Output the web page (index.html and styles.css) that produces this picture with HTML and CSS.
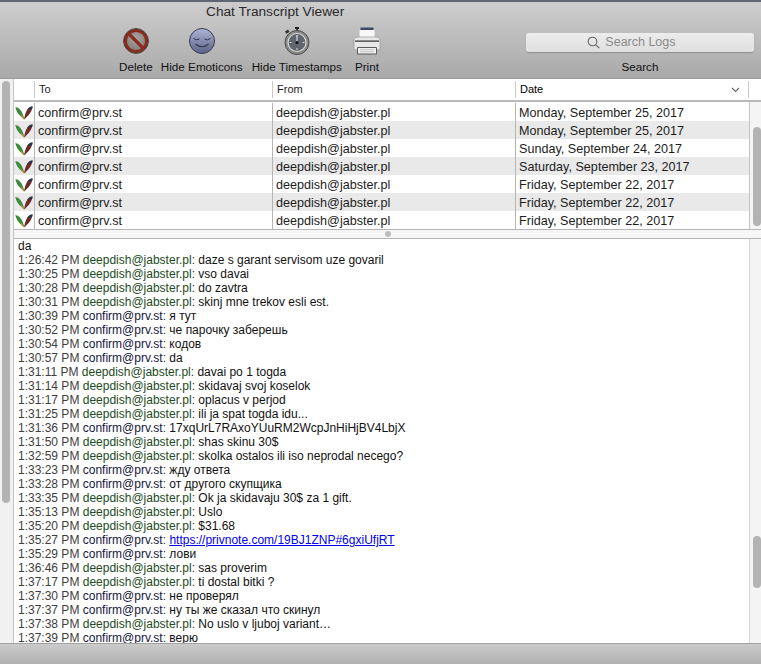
FILE: index.html
```html
<!DOCTYPE html>
<html>
<head>
    <title>Chat Transcript Viewer</title>
    <link rel="stylesheet" href="styles.css">
</head>
<body>
    <svg class="defs" width="0" height="0">
        <symbol id="wing" viewBox="0 0 18 14">
            <path d="M0.3 1.2C1.5 1 2.6 1.4 3.4 2C6 3.8 8 7.5 9.4 12.8L9 13.6C7.5 11.5 5.5 10.4 3.8 8.2C2.2 6.2 0.9 3.6 0.3 1.2Z" fill="#3c8a3c"/>
            <path d="M17.6 0.4C16.5 0.3 15.3 0.7 14.3 1.4C11.8 3.3 10 7.4 9.2 12.6L9.6 13.6C11 11.4 13.2 10 14.8 7.6C16.2 5.6 17.2 3 17.6 0.4Z" fill="#6d2a26"/>
            <path d="M17.6 0.4C16.5 0.3 15.3 0.7 14.3 1.4C13.4 2.1 12.6 3 12 4.1C13.8 3.2 15.8 3.2 17.1 3C17.3 2.2 17.5 1.3 17.6 0.4Z" fill="#27344f"/>
            <path d="M6.4 8.8C7.5 10 8.6 11.4 9.4 12.8L9 13.6C8.2 12.4 7.2 11.6 6.2 10.8Z" fill="#c89a3a"/>
        </symbol>
    </svg>

    <header class="toolbar">
        <div class="window-title">Chat Transcript Viewer</div>
        <div class="tools">
            <div class="tool tool-delete">
                <svg width="30" height="30" viewBox="0 0 30 30">
                    <defs>
                        <radialGradient id="noFill" cx="50%" cy="40%" r="60%">
                            <stop offset="0" stop-color="#a9a5a2"/>
                            <stop offset="1" stop-color="#7d7976"/>
                        </radialGradient>
                    </defs>
                    <circle cx="15" cy="14" r="11.2" fill="url(#noFill)"/>
                    <circle cx="15" cy="14" r="10.6" fill="none" stroke="#8c2a1e" stroke-width="3"/>
                    <circle cx="15" cy="14" r="12.4" fill="none" stroke="#3c3a38" stroke-width="1"/>
                    <path d="M7.5 6.5L22.5 21.5" stroke="#8c2a1e" stroke-width="3.2"/>
                </svg>
                <span>Delete</span>
            </div>
            <div class="tool tool-emoticons">
                <svg width="30" height="30" viewBox="0 0 30 30">
                    <defs>
                        <linearGradient id="faceFill" x1="0" y1="0" x2="0" y2="1">
                            <stop offset="0" stop-color="#aeb4d6"/>
                            <stop offset="1" stop-color="#5d6386"/>
                        </linearGradient>
                    </defs>
                    <circle cx="15" cy="14" r="12.5" fill="url(#faceFill)" stroke="#3a3d50" stroke-width="1"/>
                    <path d="M6.5 11.5Q10 14 12.5 12M17.5 12Q20 14 23.5 11.5" fill="none" stroke="#30344c" stroke-width="1"/>
                    <path d="M8.5 17Q15 22.5 21.5 17" fill="none" stroke="#30344c" stroke-width="1.2"/>
                </svg>
                <span>Hide Emoticons</span>
            </div>
            <div class="tool tool-timestamps">
                <svg width="30" height="30" viewBox="0 0 30 30">
                    <rect x="13" y="0" width="4" height="2" fill="#222"/>
                    <rect x="14" y="2" width="2" height="2" fill="#444"/>
                    <path d="M3 4.5L6 2.5L7.5 4.8L4.5 6.8Z" fill="#333"/>
                    <circle cx="15" cy="15.5" r="12" fill="#8a8a8a" stroke="#4a4a4a" stroke-width="1"/>
                    <circle cx="15" cy="15.5" r="9" fill="#5f6670" stroke="#d8d8d8" stroke-width="1.2"/>
                    <path d="M15 8V10M15 21V23M7.5 15.5H9.5M20.5 15.5H22.5" stroke="#d8d8d8" stroke-width="1"/>
                    <path d="M15 8.5V15.5" stroke="#e8e8e8" stroke-width="1"/>
                    <circle cx="15" cy="15.5" r="1.5" fill="#111"/>
                </svg>
                <span>Hide Timestamps</span>
            </div>
            <div class="tool tool-print">
                <svg width="30" height="30" viewBox="0 0 30 30">
                    <rect x="8.5" y="0.5" width="13" height="4" fill="#3c4a66"/>
                    <rect x="7.5" y="3" width="15" height="10" fill="#f7f7f7"/>
                    <path d="M2 13Q2 10 7 10H23Q28 10 28 13V21Q28 23 26 23H4Q2 23 2 21Z" fill="#e8e8e8" stroke="#8a8a8a" stroke-width="0.6"/>
                    <rect x="3" y="13.5" width="24" height="1.2" fill="#2c2c2c"/>
                    <rect x="5" y="20" width="20" height="7.5" rx="1" fill="#5a5a5a"/>
                    <rect x="6" y="21" width="18" height="5.5" fill="#f0f0f0"/>
                    <path d="M8 22.8H22M8 24.8H22" stroke="#b4b4b4" stroke-width="0.7"/>
                </svg>
                <span>Print</span>
            </div>
            <div class="tool tool-search">
                <div class="search-field">
                    <svg width="13" height="13" viewBox="0 0 13 13">
                        <circle cx="5.5" cy="5.5" r="4.3" fill="none" stroke="#666" stroke-width="1.1"/>
                        <path d="M8.6 8.6L12.2 12.2" stroke="#666" stroke-width="1.2"/>
                    </svg>
                    Search Logs
                </div>
                <span>Search</span>
            </div>
        </div>
    </header>

    <div class="main">
        <aside class="side-scroll"><div class="side-thumb"></div></aside>
        <div class="content">
            <div class="table-head">
                <div class="col col-icon"></div>
                <div class="col col-to">To</div>
                <div class="col col-from">From</div>
                <div class="col col-date">Date
                    <svg width="9" height="6" viewBox="0 0 9 6"><path d="M1 1L4.5 4.5L8 1" fill="none" stroke="#666" stroke-width="1.1"/></svg>
                </div>
            </div>
            <div class="table-area">
                <div class="rows">
                    <div class="row">
                        <div class="col col-icon"><svg width="18" height="14"><use href="#wing"/></svg></div>
                        <div class="col col-to">confirm@prv.st</div>
                        <div class="col col-from">deepdish@jabster.pl</div>
                        <div class="col col-date">Monday, September 25, 2017</div>
                    </div>
                    <div class="row">
                        <div class="col col-icon"><svg width="18" height="14"><use href="#wing"/></svg></div>
                        <div class="col col-to">confirm@prv.st</div>
                        <div class="col col-from">deepdish@jabster.pl</div>
                        <div class="col col-date">Monday, September 25, 2017</div>
                    </div>
                    <div class="row">
                        <div class="col col-icon"><svg width="18" height="14"><use href="#wing"/></svg></div>
                        <div class="col col-to">confirm@prv.st</div>
                        <div class="col col-from">deepdish@jabster.pl</div>
                        <div class="col col-date">Sunday, September 24, 2017</div>
                    </div>
                    <div class="row">
                        <div class="col col-icon"><svg width="18" height="14"><use href="#wing"/></svg></div>
                        <div class="col col-to">confirm@prv.st</div>
                        <div class="col col-from">deepdish@jabster.pl</div>
                        <div class="col col-date">Saturday, September 23, 2017</div>
                    </div>
                    <div class="row">
                        <div class="col col-icon"><svg width="18" height="14"><use href="#wing"/></svg></div>
                        <div class="col col-to">confirm@prv.st</div>
                        <div class="col col-from">deepdish@jabster.pl</div>
                        <div class="col col-date">Friday, September 22, 2017</div>
                    </div>
                    <div class="row">
                        <div class="col col-icon"><svg width="18" height="14"><use href="#wing"/></svg></div>
                        <div class="col col-to">confirm@prv.st</div>
                        <div class="col col-from">deepdish@jabster.pl</div>
                        <div class="col col-date">Friday, September 22, 2017</div>
                    </div>
                    <div class="row">
                        <div class="col col-icon"><svg width="18" height="14"><use href="#wing"/></svg></div>
                        <div class="col col-to">confirm@prv.st</div>
                        <div class="col col-from">deepdish@jabster.pl</div>
                        <div class="col col-date">Friday, September 22, 2017</div>
                    </div>
                </div>
                <div class="scroll-track table-track"><div class="scroll-thumb table-thumb"></div></div>
            </div>
            <div class="splitter"><span class="split-dot"></span></div>
            <div class="chat-area">
                <div class="chat">
                    <div class="chat-first">da</div>
                    <div class="line"><span class="time">1:26:42 PM</span> <span class="them">deepdish@jabster.pl</span><span class="colon">:</span> daze s garant servisom uze govaril</div>
                    <div class="line"><span class="time">1:30:25 PM</span> <span class="them">deepdish@jabster.pl</span><span class="colon">:</span> vso davai</div>
                    <div class="line"><span class="time">1:30:28 PM</span> <span class="them">deepdish@jabster.pl</span><span class="colon">:</span> do zavtra</div>
                    <div class="line"><span class="time">1:30:31 PM</span> <span class="them">deepdish@jabster.pl</span><span class="colon">:</span> skinj mne trekov esli est.</div>
                    <div class="line"><span class="time">1:30:39 PM</span> <span class="me">confirm@prv.st</span><span class="colon">:</span> я тут</div>
                    <div class="line"><span class="time">1:30:52 PM</span> <span class="me">confirm@prv.st</span><span class="colon">:</span> че парочку заберешь</div>
                    <div class="line"><span class="time">1:30:54 PM</span> <span class="me">confirm@prv.st</span><span class="colon">:</span> кодов</div>
                    <div class="line"><span class="time">1:30:57 PM</span> <span class="me">confirm@prv.st</span><span class="colon">:</span> da</div>
                    <div class="line"><span class="time">1:31:11 PM</span> <span class="them">deepdish@jabster.pl</span><span class="colon">:</span> davai po 1 togda</div>
                    <div class="line"><span class="time">1:31:14 PM</span> <span class="them">deepdish@jabster.pl</span><span class="colon">:</span> skidavaj svoj koselok</div>
                    <div class="line"><span class="time">1:31:17 PM</span> <span class="them">deepdish@jabster.pl</span><span class="colon">:</span> oplacus v perjod</div>
                    <div class="line"><span class="time">1:31:25 PM</span> <span class="them">deepdish@jabster.pl</span><span class="colon">:</span> ili ja spat togda idu...</div>
                    <div class="line"><span class="time">1:31:36 PM</span> <span class="me">confirm@prv.st</span><span class="colon">:</span> 17xqUrL7RAxoYUuRM2WcpJnHiHjBV4LbjX</div>
                    <div class="line"><span class="time">1:31:50 PM</span> <span class="them">deepdish@jabster.pl</span><span class="colon">:</span> shas skinu 30$</div>
                    <div class="line"><span class="time">1:32:59 PM</span> <span class="them">deepdish@jabster.pl</span><span class="colon">:</span> skolka ostalos ili iso neprodal necego?</div>
                    <div class="line"><span class="time">1:33:23 PM</span> <span class="me">confirm@prv.st</span><span class="colon">:</span> жду ответа</div>
                    <div class="line"><span class="time">1:33:28 PM</span> <span class="me">confirm@prv.st</span><span class="colon">:</span> от другого скупщика</div>
                    <div class="line"><span class="time">1:33:35 PM</span> <span class="them">deepdish@jabster.pl</span><span class="colon">:</span> Ok ja skidavaju 30$ za 1 gift.</div>
                    <div class="line"><span class="time">1:35:13 PM</span> <span class="them">deepdish@jabster.pl</span><span class="colon">:</span> Uslo</div>
                    <div class="line"><span class="time">1:35:20 PM</span> <span class="them">deepdish@jabster.pl</span><span class="colon">:</span> $31.68</div>
                    <div class="line"><span class="time">1:35:27 PM</span> <span class="me">confirm@prv.st</span><span class="colon">:</span> <a href="#">https://privnote.com/19BJ1ZNP#6gxiUfjRT</a></div>
                    <div class="line"><span class="time">1:35:29 PM</span> <span class="me">confirm@prv.st</span><span class="colon">:</span> лови</div>
                    <div class="line"><span class="time">1:36:46 PM</span> <span class="them">deepdish@jabster.pl</span><span class="colon">:</span> sas proverim</div>
                    <div class="line"><span class="time">1:37:17 PM</span> <span class="them">deepdish@jabster.pl</span><span class="colon">:</span> ti dostal bitki ?</div>
                    <div class="line"><span class="time">1:37:30 PM</span> <span class="me">confirm@prv.st</span><span class="colon">:</span> не проверял</div>
                    <div class="line"><span class="time">1:37:37 PM</span> <span class="me">confirm@prv.st</span><span class="colon">:</span> ну ты же сказал что скинул</div>
                    <div class="line"><span class="time">1:37:38 PM</span> <span class="them">deepdish@jabster.pl</span><span class="colon">:</span> No uslo v ljuboj variant…</div>
                    <div class="line"><span class="time">1:37:39 PM</span> <span class="me">confirm@prv.st</span><span class="colon">:</span> верю</div>
                </div>
                <div class="scroll-track chat-track"><div class="scroll-thumb chat-thumb"></div></div>
            </div>
        </div>
    </div>

    <footer class="status-bar"></footer>
</body>
</html>
```

FILE: styles.css
```css
html, body {
    margin: 0;
    height: 100%;
}

body {
    width: 761px;
    height: 664px;
    overflow: hidden;
    display: flex;
    flex-direction: column;
    font-family: "Liberation Sans", Arial, "Noto Sans", sans-serif;
    font-size: 12px;
    color: #1c1c1c;
    background: #fff;
}

.defs {
    position: absolute;
}

/* toolbar */
.toolbar {
    height: 79px;
    flex: none;
    box-sizing: border-box;
    border-top: 2px solid #5f6572;
    border-bottom: 1px solid #9b9b9b;
    background: linear-gradient(#cdcdcd, #a9a9a9);
}

.window-title {
    height: 20px;
    line-height: 20px;
    padding-left: 206px;
    font-size: 13.7px;
    color: #2a2a2a;
}

.tools {
    display: flex;
    align-items: flex-end;
    height: 52px;
}

.tool {
    display: flex;
    flex-direction: column;
    align-items: center;
    color: #111;
    font-size: 11.7px;
    line-height: 14px;
    white-space: nowrap;
}

.tool svg {
    display: block;
    margin-bottom: 3px;
}

.tool-delete {
    margin-left: 119px;
}

.tool-emoticons {
    margin-left: 8px;
}

.tool-timestamps {
    margin-left: 9px;
}

.tool-print {
    margin-left: 10px;
}

.tool-search {
    margin-left: 144px;
}

.search-field {
    width: 228px;
    height: 19px;
    line-height: 19px;
    margin-bottom: 8px;
    padding-right: 17px;
    box-sizing: border-box;
    border-radius: 3px;
    background: linear-gradient(#ececec, #dfdfdf);
    box-shadow: 0 1px 1px rgba(0, 0, 0, 0.2);
    color: #8a8a8a;
    font-size: 12.5px;
    display: flex;
    justify-content: center;
    align-items: center;
    gap: 5px;
}

.search-field svg {
    margin: 0;
}

/* main area */
.main {
    flex: 1;
    display: flex;
    min-height: 0;
}

.side-scroll {
    width: 14px;
    flex: none;
    background: #f1f1f1;
    border-right: 1px solid #c4c4c4;
    box-sizing: border-box;
    padding: 2px 2px 0;
}

.side-thumb {
    width: 8px;
    height: 422px;
    border-radius: 4px;
    background: #b3b3b3;
}

.content {
    flex: 1;
    min-width: 0;
    display: flex;
    flex-direction: column;
}

.table-head {
    height: 19px;
    flex: none;
    display: flex;
    font-size: 11px;
    padding-top: 2px;
    border-bottom: 2px solid #b9b9b9;
}

.table-head .col {
    height: 17px;
    line-height: 17px;
    border-right: 1px solid #c9c9c9;
    padding-left: 4px;
}

.table-head .col-date {
    display: flex;
    justify-content: space-between;
    align-items: center;
    color: #000;
    padding-right: 8px;
}

.col {
    box-sizing: border-box;
    flex: none;
}

.col-icon {
    width: 21px;
}

.col-to {
    width: 238px;
}

.col-from {
    width: 243px;
}

.col-date {
    width: 233px;
}

.table-area {
    height: 127px;
    flex: none;
    display: flex;
}

.rows {
    width: 736px;
    flex: none;
    padding-top: 1px;
    border-right: 1px solid #c4c4c4;
    box-sizing: border-box;
}

.row {
    height: 18px;
    display: flex;
    font-size: 12.6px;
    line-height: 21px;
}

.row:nth-child(even) {
    background: #e9e9e9;
}

.row .col {
    border-right: 1px solid #b5b5b5;
    padding-left: 3px;
}

.row .col-icon {
    padding: 3px 0 0 1px;
}

.row .col-icon svg {
    display: block;
}

.row .col-date {
    border-right: 0;
}

.scroll-track {
    flex: 1;
    background: #f4f4f4;
    padding-left: 3px;
}

.scroll-thumb {
    width: 8px;
    border-radius: 4px;
    background: #b3b3b3;
}

.table-thumb {
    height: 99px;
    margin-top: 25px;
}

.splitter {
    height: 8px;
    flex: none;
    background: #f6f6f6;
    border-top: 1px solid #b5b5b5;
    border-bottom: 1px solid #b5b5b5;
    display: flex;
    justify-content: center;
    align-items: center;
}

.split-dot {
    width: 6px;
    height: 6px;
    border-radius: 50%;
    background: #bdbdbd;
}

.chat-area {
    flex: 1;
    min-height: 0;
    display: flex;
    overflow: hidden;
}

.chat {
    width: 736px;
    flex: none;
    box-sizing: border-box;
    padding-left: 4px;
    border-right: 1px solid #d8d8d8;
    line-height: 14px;
    font-size: 12px;
    color: #111;
    overflow: hidden;
}

.time {
    color: #3e3e3e;
}

.them {
    color: #1d4a1d;
}

.me {
    color: #15163f;
}

.colon {
    color: #333;
}

.chat a {
    color: #0000ee;
}

.chat-thumb {
    height: 52px;
    margin-top: 297px;
}

/* bottom bar */
.status-bar {
    height: 21px;
    flex: none;
    border-top: 1px solid #a2a2a2;
    box-sizing: border-box;
    background: linear-gradient(#cbcbcb, #b0b0b0);
}
```
